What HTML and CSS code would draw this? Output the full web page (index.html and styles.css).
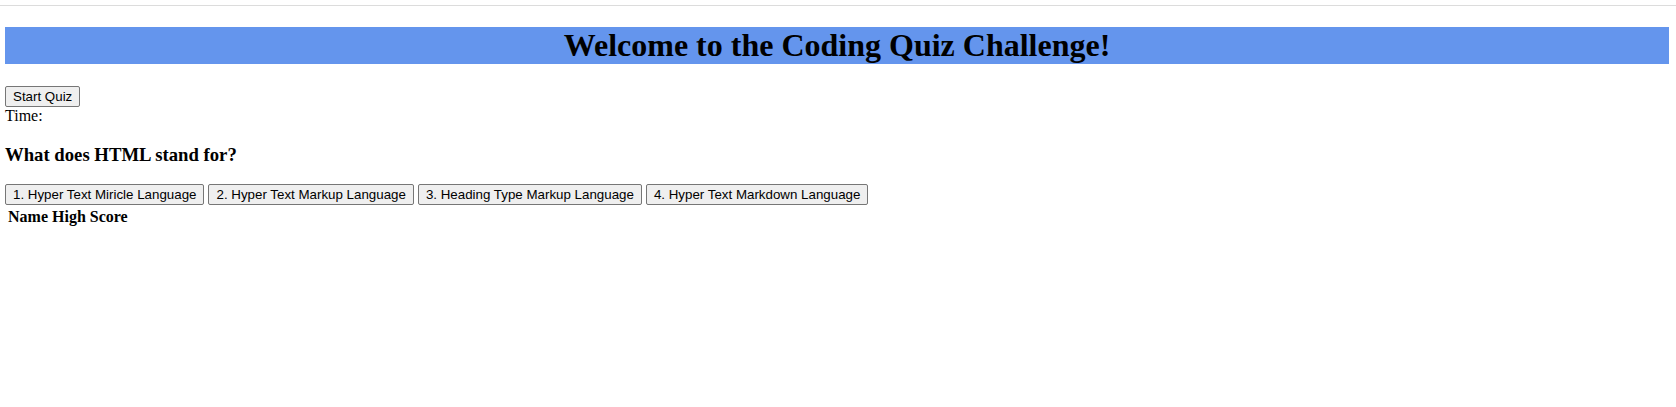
FILE: index.html
```html
<!DOCTYPE html>
<html lang="en">
<head>
<meta charset="utf-8">
<title>Coding Quiz</title>
<link rel="stylesheet" href="styles.css">
</head>
<body>
<div class="topline"></div>
<main class="page">
  <h1 class="title">Welcome to the Coding Quiz Challenge!</h1>
  <button class="btn">Start Quiz</button>
  <div class="timer">Time:</div>
  <h3 class="question">What does HTML stand for?</h3>
  <div class="answers">
    <button class="btn">1. Hyper Text Miricle Language</button>
    <button class="btn">2. Hyper Text Markup Language</button>
    <button class="btn">3. Heading Type Markup Language</button>
    <button class="btn">4. Hyper Text Markdown Language</button>
  </div>
  <table class="scores">
    <thead>
      <tr><th>Name</th><th>High Score</th></tr>
    </thead>
  </table>
</main>
</body>
</html>
```
FILE: styles.css
```css
html, body {
  margin: 0;
  padding: 0;
  background: #ffffff;
}
body {
  font-family: "Liberation Serif", "Times New Roman", serif;
  font-size: 16px;
  color: #000;
}
.topline {
  margin-top: 5px;
  border-top: 1px solid #dcdcdc;
}
.page {
  padding: 0 7px 0 5px;
}
.title {
  font-size: 32px;
  font-weight: bold;
  text-align: center;
  background: #6495ed;
  margin: 21.44px 0;
}
.btn {
  font-family: "Liberation Sans", Arial, sans-serif;
  font-size: 13.333px;
  color: #000;
  background: #efefef;
  border: 1px solid #767676;
  border-radius: 2px;
  padding: 2px 7px;
  line-height: normal;
  margin: 0;
}
.timer {
  line-height: normal;
}
.question {
  font-size: 18.72px;
  font-weight: bold;
  margin: 18.72px 0;
}
.answers {
  display: flex;
  gap: 4px;
}
.scores {
  border-spacing: 2px;
  margin-left: 0;
}
.scores th {
  padding: 1px;
  font-weight: bold;
}
```
